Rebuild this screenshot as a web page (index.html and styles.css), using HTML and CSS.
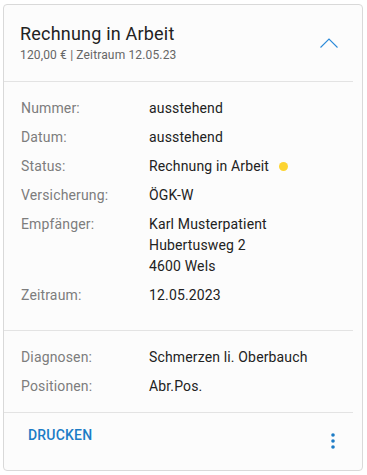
FILE: index.html
```html
<!DOCTYPE html>
<html lang="de">
<head>
    <meta charset="UTF-8">
    <meta name="viewport" content="width=device-width, initial-scale=1.0">
    <title>Rechnung</title>
    <link rel="stylesheet" href="styles.css">
</head>

<body>
    <div class="invoice-card">
        <div class="invoice-card-head">
            <div class="invoice-card-titles">
                <div class="invoice-card-title">Rechnung in Arbeit</div>
                <div class="invoice-card-sub">120,00 € | Zeitraum 12.05.23</div>
            </div>
            <svg class="invoice-card-toggle" width="18" height="10" viewBox="0 0 18 10">
                <polyline points="0.5,9.5 9,1 17.5,9.5" fill="none" stroke="#2b8ad9" stroke-width="1.1"/>
            </svg>
        </div>

        <div class="invoice-card-divider"></div>

        <div class="invoice-card-section first">
            <div class="info-row">
                <div class="info-label">Nummer:</div>
                <div class="info-value">ausstehend</div>
            </div>
            <div class="info-row">
                <div class="info-label">Datum:</div>
                <div class="info-value">ausstehend</div>
            </div>
            <div class="info-row">
                <div class="info-label">Status:</div>
                <div class="info-value">Rechnung in Arbeit <span class="status-dot"></span></div>
            </div>
            <div class="info-row">
                <div class="info-label">Versicherung:</div>
                <div class="info-value">ÖGK-W</div>
            </div>
            <div class="info-row">
                <div class="info-label">Empfänger:</div>
                <div class="info-value">Karl Musterpatient<br>Hubertusweg 2<br>4600 Wels</div>
            </div>
            <div class="info-row">
                <div class="info-label">Zeitraum:</div>
                <div class="info-value">12.05.2023</div>
            </div>
        </div>

        <div class="invoice-card-divider"></div>

        <div class="invoice-card-section second">
            <div class="info-row">
                <div class="info-label">Diagnosen:</div>
                <div class="info-value">Schmerzen li. Oberbauch</div>
            </div>
            <div class="info-row">
                <div class="info-label">Positionen:</div>
                <div class="info-value">Abr.Pos.</div>
            </div>
        </div>

        <div class="invoice-card-divider"></div>

        <div class="invoice-card-actions">
            <button class="text-btn">Drucken</button>
            <svg class="more-btn" width="24" height="24" viewBox="0 0 24 24">
                <circle cx="12" cy="6" r="1.8" fill="#1d7cc6"/>
                <circle cx="12" cy="12" r="1.8" fill="#1d7cc6"/>
                <circle cx="12" cy="18" r="1.8" fill="#1d7cc6"/>
            </svg>
        </div>
    </div>
</body>
</html>
```

FILE: styles.css
```css
body {
  margin: 0;
  background: #ffffff;
  font-family: Roboto, "Liberation Sans", sans-serif;
  letter-spacing: 0.15px;
}

.invoice-card {
  box-sizing: border-box;
  width: 360px;
  margin: 4px 0 0 3px;
  background: #fcfcfc;
  border: 1px solid #d9d9d9;
  border-radius: 4px;
}

.invoice-card-head {
  display: flex;
  align-items: center;
  justify-content: space-between;
  padding: 17px 24px 18px 16px;
}

.invoice-card-title {
  font-size: 18px;
  line-height: 24px;
  letter-spacing: 0.2px;
  color: #222222;
}

.invoice-card-sub {
  margin-top: 1px;
  font-size: 12px;
  line-height: 16px;
  color: #666666;
}

.invoice-card-toggle {
  display: block;
}

.invoice-card-divider {
  height: 1px;
  margin-right: 9px;
  background: #e3e3e3;
}

.invoice-card-section {
  display: flex;
  flex-direction: column;
  gap: 8px;
  padding: 16px 16px 0 17px;
}

.invoice-card-section.first {
  padding-bottom: 24px;
}

.invoice-card-section.second {
  padding-bottom: 15px;
}

.info-row {
  display: grid;
  grid-template-columns: 128px 1fr;
  font-size: 14px;
  line-height: 21px;
}

.info-label {
  color: #7d7d7d;
}

.info-value {
  color: #222222;
}

.status-dot {
  display: inline-block;
  width: 9px;
  height: 9px;
  margin-left: 6px;
  border-radius: 50%;
  background: #fdd431;
  vertical-align: 0px;
}

.invoice-card-actions {
  display: flex;
  justify-content: space-between;
  align-items: flex-start;
  padding: 6px 17px 17px 16px;
}

.text-btn {
  margin: 0;
  padding: 8px;
  border: none;
  background: none;
  font-family: Roboto, "Liberation Sans", sans-serif;
  font-size: 14px;
  font-weight: 500;
  line-height: 16px;
  letter-spacing: 0.2px;
  text-transform: uppercase;
  color: #1d7cc6;
  cursor: pointer;
}

.more-btn {
  display: block;
  margin-top: 10px;
}
```
